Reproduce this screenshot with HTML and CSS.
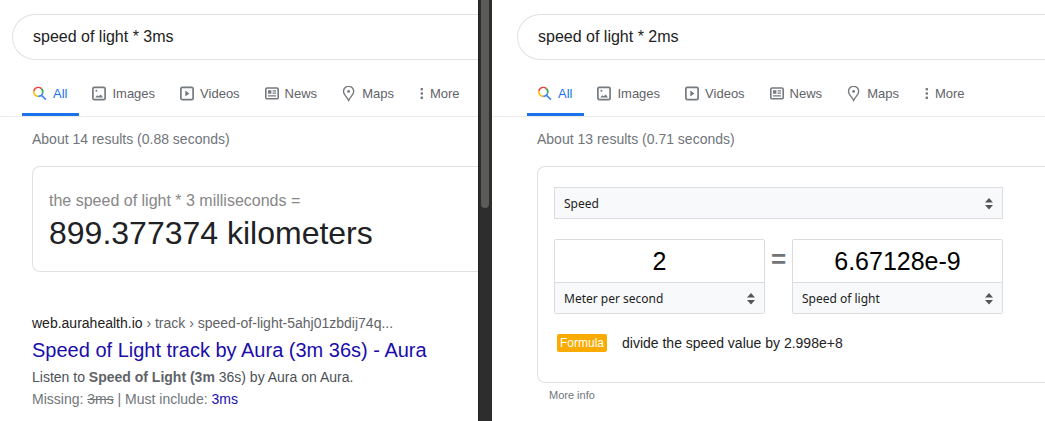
FILE: index.html
```html
<!DOCTYPE html>
<html lang="en">
<head>
<meta charset="utf-8">
<title>speed of light</title>
<link rel="stylesheet" href="styles.css">
</head>
<body>
<svg class="sprite" aria-hidden="true">
  <symbol id="i-search" viewBox="0 0 16 16">
    <g fill="none" stroke-width="1.6">
      <path d="M3.200 2.700A4.500 4.500 0 0 1 9.400 2.700" stroke="#ea4335"/>
      <path d="M3.200 2.700A4.500 4.500 0 0 0 1.900 5" stroke="#ea4335"/>
      <path d="M1.900 5A4.500 4.500 0 0 0 6.300 10.400" stroke="#fbbc04"/>
      <path d="M9.400 2.700A4.500 4.500 0 0 1 10.500 7.500" stroke="#34a853"/>
      <path d="M6.300 10.400A4.500 4.500 0 0 0 10.500 7.500M9.400 9.100L13.900 13.600" stroke="#4285f4"/>
    </g>
  </symbol>
  <symbol id="i-images" viewBox="0 0 16 16">
    <rect x="1.900" y="1.400" width="12.200" height="12.200" rx="1.400" fill="none" stroke="currentColor" stroke-width="1.700"/>
    <circle cx="5.400" cy="4.800" r="1" fill="currentColor"/>
    <path d="M4.200 11.400l2-2.200 1.400 1 2.300-1.800 2.100 3z" fill="currentColor"/>
  </symbol>
  <symbol id="i-videos" viewBox="0 0 16 16">
    <rect x="1.900" y="1.400" width="12.200" height="12.200" rx="1.400" fill="none" stroke="currentColor" stroke-width="1.700"/>
    <path d="M6.300 4.500L10.400 7.500l-4.100 3z" fill="currentColor"/>
  </symbol>
  <symbol id="i-news" viewBox="0 0 16 16">
    <rect x="1.800" y="2" width="12.400" height="10.800" rx="1.400" fill="none" stroke="currentColor" stroke-width="1.600"/>
    <path d="M4 4.300h3.400v3.400H4zM8.600 4.300H12v1.200H8.600zM8.600 6.500H12v1.200H8.600zM4 9.300h8v1.200H4z" fill="currentColor"/>
  </symbol>
  <symbol id="i-maps" viewBox="0 0 16 16">
    <path d="M7.600.4C4.700.4 2.500 2.600 2.500 5.400c0 3.400 3.300 5 5.100 9 1.800-4 5.100-5.600 5.100-9C12.700 2.600 10.500.4 7.600.4z" fill="none" stroke="currentColor" stroke-width="1.400"/>
    <circle cx="7.600" cy="5.400" r="1.400" fill="currentColor"/>
  </symbol>
  <symbol id="i-more" viewBox="0 0 7 16">
    <g fill="currentColor">
      <rect x="2.600" y="2" width="2.400" height="2.400" rx=".6"/>
      <rect x="2.600" y="6.300" width="2.400" height="2.400" rx=".6"/>
      <rect x="2.600" y="10.600" width="2.400" height="2.400" rx=".6"/>
    </g>
  </symbol>
  <symbol id="i-sort" viewBox="0 0 8 12">
    <path d="M4 0l4 4.500H0zM4 11.500L0 7h8z" fill="#555"/>
  </symbol>
</svg>

<div class="split">
  <main class="pane pane-left">
    <form class="search"><input class="search-input" type="text" aria-label="Search" value="speed of light * 3ms"></form>
    <nav class="tabs">
      <a class="tab active" href="#"><svg class="icon"><use href="#i-search"/></svg>All</a>
      <a class="tab" href="#"><svg class="icon"><use href="#i-images"/></svg>Images</a>
      <a class="tab" href="#"><svg class="icon"><use href="#i-videos"/></svg>Videos</a>
      <a class="tab" href="#"><svg class="icon"><use href="#i-news"/></svg>News</a>
      <a class="tab" href="#"><svg class="icon"><use href="#i-maps"/></svg>Maps</a>
      <button class="tab" type="button"><svg class="icon icon-dots"><use href="#i-more"/></svg>More</button>
    </nav>
    <div class="content">
      <p class="stats">About 14 results (0.88 seconds)</p>
      <section class="card answer">
        <p class="expression">the speed of light * 3 milliseconds =</p>
        <p class="value">899.377374 kilometers</p>
      </section>
      <article class="result">
        <p class="url">web.aurahealth.io<span class="crumbs"> › track › speed-of-light-5ahj01zbdij74q...</span></p>
        <h3 class="title"><a class="link" href="#">Speed of Light track by Aura (3m 36s) - Aura</a></h3>
        <p class="snippet">Listen to <b>Speed of Light (3m</b> 36s) by Aura on Aura.</p>
        <p class="missing">Missing: <s>3ms</s> | Must include: <a class="link" href="#">3ms</a></p>
      </article>
    </div>
  </main>

  <div class="scrollbar"><div class="thumb"></div></div>

  <main class="pane pane-right">
    <form class="search"><input class="search-input" type="text" aria-label="Search" value="speed of light * 2ms"></form>
    <nav class="tabs">
      <a class="tab active" href="#"><svg class="icon"><use href="#i-search"/></svg>All</a>
      <a class="tab" href="#"><svg class="icon"><use href="#i-images"/></svg>Images</a>
      <a class="tab" href="#"><svg class="icon"><use href="#i-videos"/></svg>Videos</a>
      <a class="tab" href="#"><svg class="icon"><use href="#i-news"/></svg>News</a>
      <a class="tab" href="#"><svg class="icon"><use href="#i-maps"/></svg>Maps</a>
      <button class="tab" type="button"><svg class="icon icon-dots"><use href="#i-more"/></svg>More</button>
    </nav>
    <div class="content">
      <p class="stats">About 13 results (0.71 seconds)</p>
      <section class="card converter">
        <div class="picker bordered">
          <select class="select" aria-label="Quantity"><option>Speed</option></select>
          <svg class="arrows"><use href="#i-sort"/></svg>
        </div>
        <div class="equation">
          <div class="unit">
            <input class="amount" type="text" aria-label="From value" value="2">
            <div class="picker">
              <select class="select" aria-label="From unit"><option>Meter per second</option></select>
              <svg class="arrows"><use href="#i-sort"/></svg>
            </div>
          </div>
          <span class="equals">=</span>
          <div class="unit">
            <input class="amount" type="text" aria-label="To value" value="6.67128e-9">
            <div class="picker">
              <select class="select" aria-label="To unit"><option>Speed of light</option></select>
              <svg class="arrows"><use href="#i-sort"/></svg>
            </div>
          </div>
        </div>
        <div class="formula"><span class="badge">Formula</span><span>divide the speed value by 2.998e+8</span></div>
      </section>
      <a class="more-info" href="#">More info</a>
    </div>
  </main>
</div>
</body>
</html>
```

FILE: styles.css
```css
* { box-sizing: border-box; }

body {
  margin: 0;
  background: #fff;
  color: #222;
  font: 14px/22px "Liberation Sans", Arial, sans-serif;
}

p, h3 { margin: 0; font-weight: normal; }
a { text-decoration: none; }
.sprite { position: absolute; width: 0; height: 0; }

.split {
  display: grid;
  grid-template-columns: 478fr 14px 553fr;
  min-height: 100vh;
}

.pane { min-width: 0; overflow: hidden; }
.pane-left { --edge: 12px; }
.pane-right { --edge: 25px; }

.scrollbar {
  padding: 0 3px 0 2px;
  background: #2d2d2d;
  border-left: 1px solid #1e1e1e;
}
.thumb {
  height: 208px;
  border-radius: 0 0 4px 4px;
  background: #5b5b5a;
}

.search {
  display: flex;
  height: 46px;
  margin: 14px 0 0 var(--edge);
  border: 1px solid #dfe1e5;
  border-right: 0;
  border-radius: 24px 0 0 24px;
}
.search-input {
  flex: 1;
  min-width: 0;
  padding: 0 20px;
  border: 0;
  outline: 0;
  background: none;
  color: #222;
  font: 16px "Liberation Sans", Arial, sans-serif;
}

.tabs {
  display: flex;
  gap: 2px;
  height: 57px;
  padding: 10px 0 0 calc(var(--edge) + 10px);
  border-bottom: 1px solid #ebebeb;
}
.tab {
  display: flex;
  flex: none;
  align-items: center;
  gap: 5px;
  height: 46px;
  padding: 4px 12px 0 10px;
  border: 0;
  border-bottom: 3px solid transparent;
  background: none;
  color: #5f6368;
  font: 13px "Liberation Sans", Arial, sans-serif;
}
.tab.active { color: #1a73e8; border-bottom-color: #1a73e8; }
.icon { width: 16px; height: 16px; color: #757a7f; }
.icon-dots { width: 7px; }

.content { padding-left: calc(var(--edge) + 20px); }
.stats { padding: 11px 0 16px; color: #70757a; }

.card {
  padding: 20px 16px;
  border: 1px solid #dfe1e5;
  border-right: 0;
  border-radius: 8px 0 0 8px;
}

.answer { height: 106px; }
.expression { padding-top: 2px; color: #878787; font-size: 16px; line-height: 24px; }
.value { color: #202124; font-size: 32px; line-height: 40px; }

.result { padding-top: 40px; }
.crumbs { color: #5f6368; }
.title { font-size: 20px; line-height: 32px; }
.link { color: #1a0dab; }
.snippet { color: #4d5156; }
.snippet b { color: #5f6368; }
.missing { color: #70757a; }

.equation, .picker.bordered { max-width: 449px; }
.picker { position: relative; }
.picker.bordered { border: 1px solid #dadce0; }
.select {
  display: block;
  width: 100%;
  height: 30px;
  padding: 0 28px 0 9px;
  border: 0;
  border-radius: 0;
  appearance: none;
  background: #f8f9fb;
  color: #222;
  font: 12px "Noto Sans", sans-serif;
}
.arrows {
  position: absolute;
  top: 10px;
  right: 9px;
  width: 8px;
  height: 12px;
  pointer-events: none;
}

.equation { display: flex; margin-top: 20px; }
.unit {
  flex: 1;
  min-width: 0;
  border: 1px solid #dadce0;
  border-radius: 2px;
}
.amount {
  display: block;
  width: 100%;
  height: 43px;
  padding: 0;
  border: 0;
  border-bottom: 1px solid #dadce0;
  outline: 0;
  background: none;
  color: #000;
  font: 25px "Liberation Sans", Arial, sans-serif;
  text-align: center;
}
.equals {
  width: 27px;
  color: #70757a;
  font-size: 26px;
  font-weight: bold;
  line-height: 40px;
  text-align: center;
}

.formula {
  display: flex;
  align-items: center;
  gap: 15px;
  padding: 18px 0 8px 3px;
}
.badge {
  padding: 0 3px;
  border-radius: 2px;
  background: #f9ab00;
  color: #fff;
  font-size: 12px;
  line-height: 18px;
}
.more-info {
  display: block;
  padding-left: 12px;
  color: #70757a;
  font-size: 11px;
  line-height: 24px;
}
```
